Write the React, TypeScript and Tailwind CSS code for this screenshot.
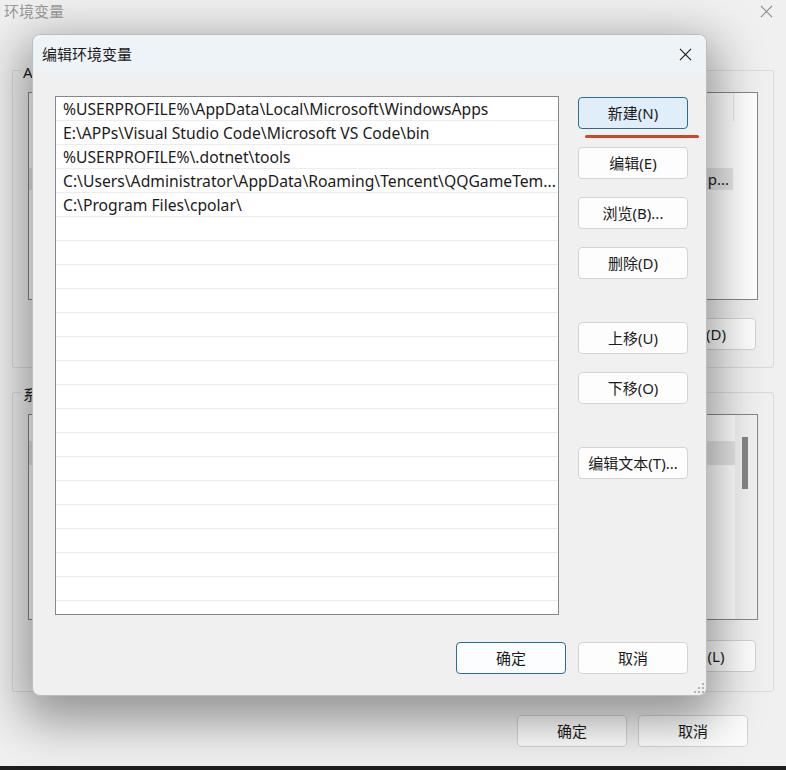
import React from "react";

const paths = [
  "%USERPROFILE%\\AppData\\Local\\Microsoft\\WindowsApps",
  "E:\\APPs\\Visual Studio Code\\Microsoft VS Code\\bin",
  "%USERPROFILE%\\.dotnet\\tools",
  "C:\\Users\\Administrator\\AppData\\Roaming\\Tencent\\QQGameTem...",
  "C:\\Program Files\\cpolar\\",
];

const font = "font-['Noto_Sans','Noto_Sans_CJK_SC',sans-serif]";

function WinButton({
  label,
  focused,
  className = "",
}: {
  label: string;
  focused?: boolean;
  className?: string;
}) {
  return (
    <button
      className={
        "flex h-[32px] w-[110px] items-center justify-center rounded-[4px] border text-[15px] text-[#1b1b1b] " +
        (focused
          ? "border-[#2a6d96] bg-[#e0eef9] "
          : "border-[#d3d3d3] bg-[#fdfdfd] ") +
        className
      }
    >
      {label}
    </button>
  );
}

function CloseIcon({ color, size }: { color: string; size: number }) {
  return (
    <svg width={size} height={size} viewBox="0 0 14 14">
      <path d="M1 1 L13 13 M13 1 L1 13" stroke={color} strokeWidth="1.2" />
    </svg>
  );
}

function ResizeGrip() {
  return (
    <svg width="10" height="10" viewBox="0 0 10 10">
      {[
        [8, 0],
        [4, 4],
        [8, 4],
        [0, 8],
        [4, 8],
        [8, 8],
      ].map(([x, y]) => (
        <rect key={`${x}-${y}`} x={x} y={y} width="2" height="2" fill="#b4b4b4" />
      ))}
    </svg>
  );
}

function BackgroundWindow() {
  return (
    <div className="flex h-[770px] w-[786px] flex-col bg-[#f0f0f0]">
      <div className="flex h-[22px] items-center justify-between pl-[4px] pr-[13px]">
        <span className="text-[15px] text-[#9a9a9a]">环境变量</span>
        <CloseIcon color="#8a8a8a" size={13} />
      </div>

      <div className="px-[12px]">
        {/* user variables */}
        <div className="relative mt-[48px] h-[298px] rounded-[2px] border border-[#dadada] pl-[15px] pr-[15px] pt-[21px]">
          <span className="absolute -top-[10px] left-[8px] bg-[#f0f0f0] px-[2px] text-[15px] text-[#1b1b1b]">
            Administrator 的用户变量(U)
          </span>
          <div className="relative h-[208px] border border-[#828790] bg-white">
            <div className="absolute left-[704px] top-0 h-[28px] w-px bg-[#e5e5e5]" />
            <div className="mr-[24px] mt-[75px] flex h-[22px] items-center justify-end bg-[#e8e8e8] pr-[4px] text-[15px] text-[#1b1b1b]">
              p...
            </div>
          </div>
          <div className="mt-[18px] flex justify-end pr-[2px]">
            <WinButton label="删除(D)" />
          </div>
        </div>

        {/* system variables */}
        <div className="relative mt-[24px] h-[300px] rounded-[2px] border border-[#dadada] pl-[15px] pr-[15px] pt-[21px]">
          <span className="absolute -top-[10px] left-[8px] bg-[#f0f0f0] px-[2px] text-[15px] text-[#1b1b1b]">
            系统变量(S)
          </span>
          <div className="flex h-[206px] border border-[#828790] bg-white">
            <div className="flex-1">
              <div className="mt-[26px] h-[24px] bg-[#e6e6e6]" />
            </div>
            <div className="w-[22px] bg-[#f2f2f2] pl-[7px] pt-[22px]">
              <div className="h-[52px] w-[6px] bg-[#858585]" />
            </div>
          </div>
          <div className="mt-[20px] flex justify-end pr-[2px]">
            <WinButton label="删除(L)" />
          </div>
        </div>

        <div className="mr-[26px] mt-[23px] flex justify-end gap-[11px]">
          <WinButton label="确定" />
          <WinButton label="取消" />
        </div>
      </div>

      <div className="flex-1" />
      <div className="h-[4px] bg-[#1e1e1e]" />
    </div>
  );
}

function EditDialog() {
  return (
    <div className="absolute left-[32px] top-[34px] flex h-[662px] w-[675px] flex-col overflow-hidden rounded-[8px] border border-[#bdbdbd] bg-[#f0f0f0] shadow-[0_16px_48px_10px_rgba(0,0,0,0.38)]">
      <div className="flex h-[38px] items-center justify-between bg-[#eef3f8] pl-[9px] pr-[14px]">
        <span className="text-[15px] text-[#1b1b1b]">编辑环境变量</span>
        <CloseIcon color="#1b1b1b" size={13} />
      </div>

      <div className="flex pl-[22px] pt-[23px]">
        <div className="h-[519px] w-[504px] overflow-hidden border border-[#828790] bg-white">
          {Array.from({ length: 22 }).map((_, i) => (
            <div
              key={i}
              className="flex h-[24px] items-center border-b border-[#ececec] pl-[7px] pt-[3px] text-[15.7px] text-[#1b1b1b] whitespace-nowrap"
            >
              {paths[i] ?? ""}
            </div>
          ))}
        </div>

        <div className="ml-[19px] flex flex-col pt-[1px]">
          <WinButton label="新建(N)" focused />
          <WinButton label="编辑(E)" className="mt-[18px]" />
          <WinButton label="浏览(B)..." className="mt-[18px]" />
          <WinButton label="删除(D)" className="mt-[18px]" />
          <WinButton label="上移(U)" className="mt-[43px]" />
          <WinButton label="下移(O)" className="mt-[18px]" />
          <WinButton label="编辑文本(T)..." className="mt-[43px]" />
        </div>
      </div>

      <div className="mt-[27px] flex justify-end gap-[12px] pr-[18px]">
        <WinButton label="确定" className="!border-[#2a6d96] !bg-[#fbfdfe]" />
        <WinButton label="取消" />
      </div>

      <div className="flex flex-1 items-end justify-end pb-[2px] pr-[2px]">
        <ResizeGrip />
      </div>
    </div>
  );
}

export default function App() {
  return (
    <div className={"relative h-[770px] w-[786px] overflow-hidden " + font}>
      <BackgroundWindow />
      <EditDialog />
      {/* annotation underline under 新建 */}
      <div className="absolute left-[585px] top-[135px] h-[3px] w-[114px] rounded-full bg-[#cf4526]" />
    </div>
  );
}
